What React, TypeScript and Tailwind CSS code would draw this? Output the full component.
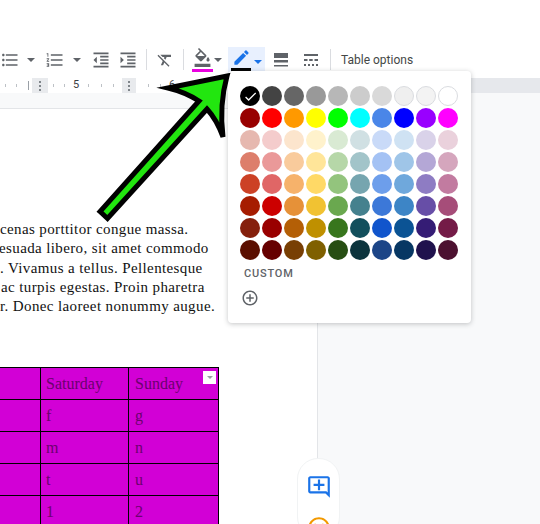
import React from "react";
import {
  MdFormatListBulleted,
  MdFormatListNumbered,
  MdFormatIndentDecrease,
  MdFormatIndentIncrease,
  MdFormatClear,
  MdFormatColorFill,
  MdEdit,
  MdCheck,
  MdAddCircleOutline,
  MdOutlineAddComment,
  MdOutlineInsertEmoticon,
} from "react-icons/md";

const palette = [
  ["#000000", "#434343", "#666666", "#999999", "#b7b7b7", "#cccccc", "#d9d9d9", "#efefef", "#f3f3f3", "#ffffff"],
  ["#980000", "#ff0000", "#ff9900", "#ffff00", "#00ff00", "#00ffff", "#4a86e8", "#0000ff", "#9900ff", "#ff00ff"],
  ["#e6b8af", "#f4cccc", "#fce5cd", "#fff2cc", "#d9ead3", "#d0e0e3", "#c9daf8", "#cfe2f3", "#d9d2e9", "#ead1dc"],
  ["#dd7e6b", "#ea9999", "#f9cb9c", "#ffe599", "#b6d7a8", "#a2c4c9", "#a4c2f4", "#9fc5e8", "#b4a7d6", "#d5a6bd"],
  ["#cc4125", "#e06666", "#f6b26b", "#ffd966", "#93c47d", "#76a5af", "#6d9eeb", "#6fa8dc", "#8e7cc3", "#c27ba0"],
  ["#a61c00", "#cc0000", "#e69138", "#f1c232", "#6aa84f", "#45818e", "#3c78d8", "#3d85c6", "#674ea7", "#a64d79"],
  ["#85200c", "#990000", "#b45f06", "#bf9000", "#38761d", "#134f5c", "#1155cc", "#0b5394", "#351c75", "#741b47"],
  ["#5b0f00", "#660000", "#783f04", "#7f6000", "#274e13", "#0c343d", "#1c4587", "#073763", "#20124d", "#4c1130"],
];

const paragraph = [
  { text: "cenas porttitor congue massa.", indent: "ml-0" },
  { text: "esuada libero, sit amet commodo", indent: "-ml-px" },
  { text: ". Vivamus a tellus. Pellentesque", indent: "ml-0" },
  { text: "ac turpis egestas. Proin pharetra", indent: "ml-[1px]" },
  { text: "r. Donec laoreet nonummy augue.", indent: "ml-0" },
];

const tableRows = [
  ["Saturday", "Sunday"],
  ["f", "g"],
  ["m", "n"],
  ["t", "u"],
  ["1", "2"],
];

function Caret({ className = "border-t-[#5f6368]" }: { className?: string }) {
  return <span className={`block w-0 h-0 shrink-0 border-x-[4px] border-x-transparent border-t-[4px] ${className}`} />;
}

function Divider({ className }: { className: string }) {
  return <span className={`block w-px h-[21px] bg-[#dadce0] shrink-0 ${className}`} />;
}

function BorderWeightIcon() {
  return (
    <svg className="ml-[8px] shrink-0" width="16" height="14" viewBox="0 0 16 14" fill="#5f6368">
      <rect x="1" y="0" width="14" height="5" />
      <rect x="1" y="7" width="14" height="2.5" />
      <rect x="1" y="12" width="14" height="1.5" />
    </svg>
  );
}

function BorderDashIcon() {
  return (
    <svg className="ml-[14px] shrink-0" width="16" height="12" viewBox="0 0 16 12" fill="#5f6368">
      <rect x="1" y="0" width="14" height="2" />
      <rect x="1" y="5" width="3.5" height="2" />
      <rect x="6.2" y="5" width="3.5" height="2" />
      <rect x="11.5" y="5" width="3.5" height="2" />
      <rect x="1" y="10" width="2" height="2" />
      <rect x="5" y="10" width="2" height="2" />
      <rect x="9" y="10" width="2" height="2" />
      <rect x="13" y="10" width="2" height="2" />
    </svg>
  );
}

function Toolbar() {
  return (
    <div className="h-[33px] mt-[43px] flex items-center text-[#5f6368] shrink-0">
      <MdFormatListBulleted size={20} className="shrink-0" />
      <span className="ml-[7px]"><Caret /></span>
      <MdFormatListNumbered size={20} className="ml-[10px] shrink-0" />
      <span className="ml-[8px]"><Caret /></span>
      <MdFormatIndentDecrease size={20} className="ml-[10px] shrink-0" />
      <MdFormatIndentIncrease size={20} className="ml-[7px] shrink-0" />
      <Divider className="ml-[8px]" />
      <MdFormatClear size={18} className="ml-[9px] shrink-0" />
      <Divider className="ml-[9px]" />
      <div className="ml-[6px] w-[24px] flex flex-col items-center shrink-0">
        <MdFormatColorFill size={19} />
        <span className="block w-[21px] h-[3px] bg-[#ea00e0] mt-[2px]" />
      </div>
      <span><Caret /></span>
      <div className="ml-[6px] w-[37px] h-[26px] bg-[#e8f0fe] flex items-start shrink-0">
        <div className="w-[26px] flex flex-col items-center pt-[1px]">
          <MdEdit size={19} className="text-[#1a73e8]" />
          <span className="block w-[20px] h-[4px] bg-black mt-[1px]" />
        </div>
        <span className="mt-[13px]"><Caret className="border-t-[#1a73e8]" /></span>
      </div>
      <BorderWeightIcon />
      <BorderDashIcon />
      <Divider className="ml-[11px]" />
      <span className="ml-[10px] text-[12px] text-[#444746] font-['Roboto',sans-serif] whitespace-nowrap">Table options</span>
    </div>
  );
}

function RulerTicks({ className, count }: { className: string; count: number }) {
  return (
    <div className={`flex items-center justify-between shrink-0 ${className}`}>
      {Array.from({ length: count }).map((_, i) => (
        <span key={i} className="block w-px h-[3px] bg-[#bdc1c6]" />
      ))}
    </div>
  );
}

function RulerHandle({ className }: { className: string }) {
  return (
    <div className={`h-[15px] bg-[#e8eaed] flex flex-col items-center justify-center gap-[2px] shrink-0 ${className}`}>
      <span className="block w-[2px] h-[2px] bg-[#80868b]" />
      <span className="block w-[2px] h-[2px] bg-[#80868b]" />
      <span className="block w-[2px] h-[2px] bg-[#80868b]" />
    </div>
  );
}

function Ruler() {
  return (
    <div className="h-[15px] mt-[2px] flex items-center bg-white shrink-0 font-['Roboto',sans-serif] text-[11px] text-[#3c4043]">
      <RulerTicks className="w-[12px] ml-[5px]" count={2} />
      <span className="block w-px h-[9px] bg-[#9aa0a6] ml-[11px] shrink-0" />
      <RulerHandle className="w-[16px] ml-[3px]" />
      <RulerTicks className="w-[12px] ml-[5px]" count={2} />
      <span className="ml-[7px] w-[8px] text-center">5</span>
      <RulerTicks className="w-[26px] ml-[8px]" count={3} />
      <RulerHandle className="w-[14px] ml-[8px]" />
      <RulerTicks className="w-[13px] ml-[12px]" count={2} />
      <span className="ml-[7px] w-[8px] text-center">6</span>
      <div className="flex-1" />
      <div className="w-[222px] h-[15px] bg-[#e6e8ec] shrink-0" />
    </div>
  );
}

function ColorPopup() {
  return (
    <div className="absolute left-[228px] top-[71px] w-[243px] h-[252px] bg-white rounded-[4px] shadow-[0_1px_5px_rgba(60,64,67,0.3)] z-10 pt-[15px] pl-[12px]">
      <div className="flex flex-col gap-[2px]">
        {palette.map((row, i) => (
          <div key={i} className="flex gap-[2px]">
            {row.map((color, j) => (
              <span
                key={j}
                style={{ backgroundColor: color }}
                className={`w-[20px] h-[20px] rounded-full flex items-center justify-center ${
                  i === 0 && j > 6 ? "border border-[#dadce0]" : ""
                }`}
              >
                {i === 0 && j === 0 && <MdCheck size={15} className="text-white" />}
              </span>
            ))}
          </div>
        ))}
      </div>
      <div className="mt-[7px] ml-[4px] text-[11px] leading-[14px] tracking-[0.8px] font-medium text-[#5f6368] font-['Roboto',sans-serif]">CUSTOM</div>
      <MdAddCircleOutline size={18} className="mt-[8px] ml-px text-[#5f6368]" />
    </div>
  );
}

function Arrow() {
  return (
    <svg className="absolute left-[95px] top-[70px] z-20" width="165" height="155" viewBox="95 70 165 155">
      <path
        d="M100 211.5 L107.5 218.5 L207 109 Q217 120 223 137 Q219 105 227 76 Q198 82 168 88 Q185 92 199 101 Z"
        fill="#22e60f"
        stroke="#000"
        strokeWidth="5"
        strokeLinejoin="miter"
        strokeMiterlimit="6"
      />
    </svg>
  );
}

function DocTable() {
  return (
    <div className="mt-[51px] w-[219px] border-t border-r border-black bg-[#d200d6] font-['Liberation_Serif',serif] text-[16px] text-[#6c006f]">
      {tableRows.map((row, i) => (
        <div key={i} className={`grid grid-cols-[41px_88px_89px] h-[32px] border-b border-black ${i === 4 ? "border-b-0" : ""}`}>
          <span className="border-r border-black" />
          <span className="border-r border-black pl-[5px] flex items-center">{row[0]}</span>
          <span className="relative pl-[6px] flex items-center">
            {row[1]}
            {i === 0 && (
              <span className="absolute right-[2px] top-[3px] w-[13px] h-[13px] bg-white flex items-center justify-center">
                <span className="block w-0 h-0 border-x-[3px] border-x-transparent border-t-[3px] border-t-[#9aa0a6]" />
              </span>
            )}
          </span>
        </div>
      ))}
    </div>
  );
}

export default function App() {
  return (
    <div className="relative w-[540px] h-[524px] overflow-hidden bg-white flex flex-col">
      <Toolbar />
      <Ruler />
      <div className="h-[15px] bg-[#f8f9fa] shrink-0" />
      <div className="flex flex-1 min-h-0">
        <div className="w-[318px] shrink-0 bg-white border-r border-t border-[#e3e5e8]">
          <div className="mt-[111px] font-['Liberation_Serif',serif] text-[15px] leading-[19.3px] text-[#111] tracking-[0.38px]">
            {paragraph.map((line) => (
              <div key={line.text} className={`whitespace-nowrap ${line.indent}`}>{line.text}</div>
            ))}
          </div>
          <DocTable />
        </div>
        <div className="flex-1 bg-[#f8f9fa]" />
      </div>

      <ColorPopup />
      <Arrow />

      <div className="absolute left-[297px] top-[458px] w-[43px] h-[80px] bg-white rounded-[21px] border border-[#f1f3f4] flex flex-col items-center pt-[15px] gap-[15px]">
        <MdOutlineAddComment size={26} className="text-[#1a73e8] shrink-0" />
        <MdOutlineInsertEmoticon size={26} className="text-[#f29900] shrink-0" />
      </div>
    </div>
  );
}
